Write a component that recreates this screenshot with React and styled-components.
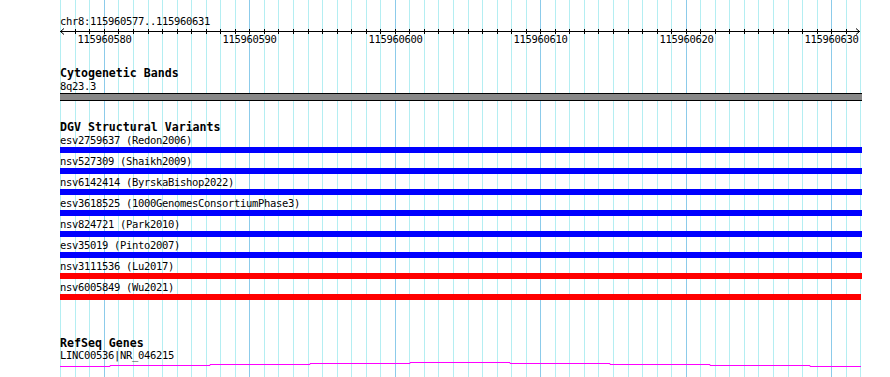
import React from "react";
import styled, { createGlobalStyle } from "styled-components";

const GlobalStyle = createGlobalStyle`
  html, body {
    margin: 0;
    padding: 0;
    background: #ffffff;
  }
`;

// 55 bases drawn across 800px, first guideline at x=60
const BASES = 55;
const START = 115960577;
const gridX = (i) => Math.round(60.3 + (i * 800) / BASES);

const variants = [
  { name: "esv2759637 (Redon2006)", color: "#0000ff" },
  { name: "nsv527309 (Shaikh2009)", color: "#0000ff" },
  { name: "nsv6142414 (ByrskaBishop2022)", color: "#0000ff" },
  { name: "esv3618525 (1000GenomesConsortiumPhase3)", color: "#0000ff" },
  { name: "nsv824721 (Park2010)", color: "#0000ff" },
  { name: "esv35019 (Pinto2007)", color: "#0000ff" },
  { name: "nsv3111536 (Lu2017)", color: "#ff0000" },
  { name: "nsv6005849 (Wu2021)", color: "#ff0000" },
];

// gene line: [from, to, row] in page pixels
const geneSteps = [
  [60, 110, 366],
  [110, 210, 365],
  [210, 310, 364],
  [310, 410, 363],
  [410, 510, 362],
  [510, 610, 363],
  [610, 710, 364],
  [710, 810, 365],
  [810, 861, 366],
];
const GENE_TOP = 361;

const Page = styled.div`
  position: relative;
  width: 890px;
  height: 377px;
  overflow: hidden;
  background: #ffffff;
  font-family: "DejaVu Sans Mono", "Liberation Mono", monospace;
  color: #000;
`;

const Guides = styled.svg`
  position: absolute;
  left: 0;
  top: 0;
  z-index: 0;
`;

const Tracks = styled.div`
  position: relative;
  z-index: 1;
  width: 802px;
  padding-left: 60px;
  display: flex;
  flex-direction: column;
`;

const PositionLabel = styled.div`
  margin-top: 15px;
  font-size: 10.5px;
  letter-spacing: -0.32px;
  line-height: 13px;
  white-space: nowrap;
`;

const RulerSvg = styled.svg`
  display: block;
  font-family: "DejaVu Sans Mono", "Liberation Mono", monospace;
  font-size: 10.5px;
  letter-spacing: -0.32px;
`;

const Track = styled.section`
  display: flex;
  flex-direction: column;
  margin-top: ${(p) => p.$gap}px;
`;

const TrackTitle = styled.div`
  font-size: 11.6px;
  font-weight: bold;
  line-height: ${(p) => p.$lh || 14}px;
  white-space: nowrap;
`;

const ItemLabel = styled.div`
  font-size: 10.5px;
  letter-spacing: -0.32px;
  line-height: ${(p) => p.$lh || 12}px;
  white-space: nowrap;
`;

const BandBar = styled.div`
  margin-top: 1px;
  height: 6px;
  background: #888888;
  border-top: 1px solid #000;
  border-bottom: 1px solid #000;
`;

const VariantRow = styled.div`
  display: flex;
  flex-direction: column;
  padding-bottom: 2px;
`;

const VariantBar = styled.div`
  margin-top: 1px;
  height: 6px;
  width: ${(p) => p.$w || 802}px;
  background: ${(p) => p.$color};
`;

const GeneSvg = styled.svg`
  display: block;
`;

const GridLines = () => (
  <Guides width="890" height="377">
    {Array.from({ length: BASES + 1 }, (_, i) => {
      const x = gridX(i) + 0.5;
      const major = (i + 7) % 10 === 0;
      return (
        <line
          key={i}
          x1={x}
          x2={x}
          y1="0"
          y2="377"
          stroke={major ? "#8ccbea" : "#b4eef2"}
          strokeWidth="1"
        />
      );
    })}
  </Guides>
);

const Ruler = () => {
  const ticks = Array.from({ length: BASES - 1 }, (_, k) => k + 1);
  const labels = ticks.filter((i) => (START + i) % 10 === 0);
  return (
    <RulerSvg width="802" height="20">
      <line x1="0" x2="800" y1="3.5" y2="3.5" stroke="#000" />
      <polyline points="4,0.5 0.5,3.5 4,6.5" fill="none" stroke="#000" />
      <polyline points="796,0.5 799.5,3.5 796,6.5" fill="none" stroke="#000" />
      {ticks.map((i) => {
        const x = gridX(i) - 60 + 0.5;
        return <line key={i} x1={x} x2={x} y1="1" y2="6" stroke="#000" />;
      })}
      {labels.map((i) => (
        <text key={i} x={gridX(i) - 60 + 0.5} y="15.4" textAnchor="middle" fill="#000">
          {START + i}
        </text>
      ))}
    </RulerSvg>
  );
};

const GeneLine = () => {
  const pts = [];
  geneSteps.forEach(([a, b, row]) => {
    const y = row - GENE_TOP + 0.5;
    pts.push(`${a - 60},${y}`, `${b - 60},${y}`);
  });
  return (
    <GeneSvg width="802" height="10">
      <polyline points={pts.join(" ")} fill="none" stroke="#ff00ff" strokeWidth="1" />
    </GeneSvg>
  );
};

const App = () => {
  return (
    <Page>
      <GlobalStyle />
      <GridLines />
      <Tracks>
        <PositionLabel>chr8:115960577..115960631</PositionLabel>
        <Ruler />

        <Track $gap={18}>
          <TrackTitle>Cytogenetic Bands</TrackTitle>
          <ItemLabel>8q23.3</ItemLabel>
          <BandBar />
        </Track>

        <Track $gap={19}>
          <TrackTitle>DGV Structural Variants</TrackTitle>
          {variants.map((v, i) => (
            <VariantRow key={v.name}>
              <ItemLabel>{v.name}</ItemLabel>
              <VariantBar $color={v.color} $w={i === variants.length - 1 ? 801 : 802} />
            </VariantRow>
          ))}
        </Track>

        <Track $gap={36}>
          <TrackTitle $lh={11}>RefSeq Genes</TrackTitle>
          <ItemLabel $lh={12}>LINC00536|NR_046215</ItemLabel>
          <GeneLine />
        </Track>
      </Tracks>
    </Page>
  );
};

export default App;
